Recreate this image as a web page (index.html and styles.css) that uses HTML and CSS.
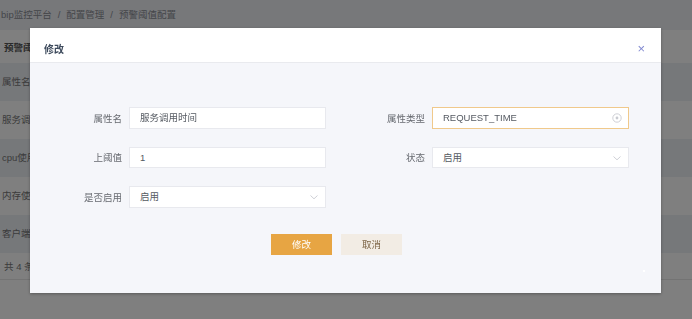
FILE: index.html
```html
<!DOCTYPE html>
<html lang="zh-CN">
<head>
    <meta charset="UTF-8">
    <meta name="viewport" content="width=device-width, initial-scale=1.0">
    <title>预警阈值配置</title>
    <link rel="stylesheet" href="styles.css">
</head>
<body>
    <!-- page behind the dialog -->
    <div class="page">
        <div class="breadcrumb">bip监控平台<span class="sep">/</span>配置管理<span class="sep">/</span>预警阈值配置</div>
        <div class="card-title"><span>预警阈值配置</span></div>
        <div class="table">
            <div class="tr th"><span>属性名</span></div>
            <div class="tr"><span>服务调用时间</span></div>
            <div class="tr odd"><span>cpu使用率</span></div>
            <div class="tr"><span>内存使用率</span></div>
            <div class="tr odd"><span>客户端连接数</span></div>
            <div class="tr pager"><span>共 4 条</span></div>
        </div>
    </div>

    <div class="mask"></div>

    <!-- edit dialog -->
    <div class="dialog">
        <div class="dialog-header">
            <span class="dialog-title">修改</span>
            <span class="dialog-close">&times;</span>
        </div>
        <div class="dialog-body">
            <div class="form">
                <div class="form-item">
                    <label class="form-label">属性名</label>
                    <div class="input">服务调用时间</div>
                </div>
                <div class="form-item">
                    <label class="form-label">属性类型</label>
                    <div class="input focus">
                        REQUEST_TIME
                        <svg class="suffix" width="10" height="10" viewBox="0 0 10 10">
                            <circle cx="5" cy="5" r="4.2" fill="none" stroke="#c9cbd1" stroke-width="0.9"/>
                            <circle cx="5" cy="5" r="1.4" fill="#c9cbd1"/>
                        </svg>
                    </div>
                </div>
                <div class="form-item">
                    <label class="form-label">上阈值</label>
                    <div class="input">1</div>
                </div>
                <div class="form-item">
                    <label class="form-label">状态</label>
                    <div class="input">
                        启用
                        <svg class="suffix" width="10" height="10" viewBox="0 0 10 10">
                            <path d="M1.5 3.5 L5 6.8 L8.5 3.5" fill="none" stroke="#c9cbd1" stroke-width="0.9"/>
                        </svg>
                    </div>
                </div>
                <div class="form-item">
                    <label class="form-label">是否启用</label>
                    <div class="input">
                        启用
                        <svg class="suffix" width="10" height="10" viewBox="0 0 10 10">
                            <path d="M1.5 3.5 L5 6.8 L8.5 3.5" fill="none" stroke="#c9cbd1" stroke-width="0.9"/>
                        </svg>
                    </div>
                </div>
            </div>
            <div class="actions">
                <button class="btn btn-primary">修改</button>
                <button class="btn btn-cancel">取消</button>
            </div>
        </div>
        <span class="backtop"></span>
    </div>
</body>
</html>
```

FILE: styles.css
```css
* {
    margin: 0;
    padding: 0;
    box-sizing: border-box;
}

body {
    font-family: "Liberation Sans", "Noto Sans CJK SC", sans-serif;
    background-color: #fff;
    width: 692px;
    height: 319px;
    overflow: hidden;
}

/* page behind */
.breadcrumb {
    height: 30px;
    line-height: 30px;
    padding-left: 1px;
    font-size: 9.5px;
    color: #8a8d94;
    background-color: #eef0f5;
}

.sep {
    margin: 0 6px;
}

.card-title {
    height: 33px;
    line-height: 36px;
    padding-left: 4px;
    font-size: 9.5px;
    font-weight: bold;
    color: #555;
    background-color: #fff;
}

.card-title span {
    display: inline-block;
    width: 26px;
    overflow: hidden;
    white-space: nowrap;
    vertical-align: top;
}

.tr {
    height: 38px;
    line-height: 38px;
    padding-left: 2px;
    font-size: 9.5px;
    color: #777;
    background-color: #fff;
}

.tr.th,
.tr.odd {
    background-color: #ecf0f5;
}

.tr.pager {
    height: 27px;
    line-height: 27px;
    padding-left: 4px;
    border-bottom: 1px solid #e6e6e6;
}

.mask {
    position: fixed;
    top: 0;
    left: 0;
    right: 0;
    bottom: 0;
    background-color: rgba(0, 0, 0, 0.5);
}

/* dialog */
.dialog {
    position: fixed;
    top: 28px;
    left: 30px;
    width: 631px;
    height: 265px;
    background-color: #f5f6fa;
    box-shadow: 0 1px 3px rgba(0, 0, 0, 0.3);
}

.dialog-header {
    height: 35px;
    padding: 15px 14px 0 14px;
    display: flex;
    justify-content: space-between;
    background-color: #fff;
    border-bottom: 1px solid #e9eaee;
}

.dialog-title {
    font-size: 10px;
    line-height: 14px;
    font-weight: bold;
    color: #3d4a5c;
}

.dialog-close {
    font-size: 13px;
    line-height: 10px;
    color: #8189d0;
    margin-top: 1px;
    margin-right: 2px;
}

.dialog-body {
    padding: 44px 0 0 22px;
}

.form {
    display: grid;
    grid-template-columns: 274px 274px;
    column-gap: 29px;
    row-gap: 18px;
}

.form-item {
    display: flex;
    align-items: center;
    gap: 7px;
}

.form-label {
    width: 70px;
    text-align: right;
    font-size: 9.5px;
    color: #676a70;
}

.input {
    position: relative;
    width: 197px;
    height: 21.5px;
    line-height: 19.5px;
    padding-left: 10px;
    font-size: 9.5px;
    color: #555a62;
    background-color: #fff;
    border: 1px solid #e8e9ee;
}

.input.focus {
    border-color: #f0c98b;
}

.suffix {
    position: absolute;
    right: 6px;
    top: 5px;
}

.actions {
    display: flex;
    gap: 9px;
    padding: 26px 0 0 219px;
}

.btn {
    width: 61px;
    height: 21px;
    border: none;
    font-family: "Liberation Sans", "Noto Sans CJK SC", sans-serif;
    font-size: 9.5px;
    cursor: pointer;
}

.btn-primary {
    background-color: #e7a543;
    color: #fff;
}

.btn-cancel {
    background-color: #f2ece4;
    color: #7d6547;
}

.backtop {
    position: absolute;
    left: 613px;
    top: 242px;
    width: 2px;
    height: 2px;
    background-color: #fff;
}
```
